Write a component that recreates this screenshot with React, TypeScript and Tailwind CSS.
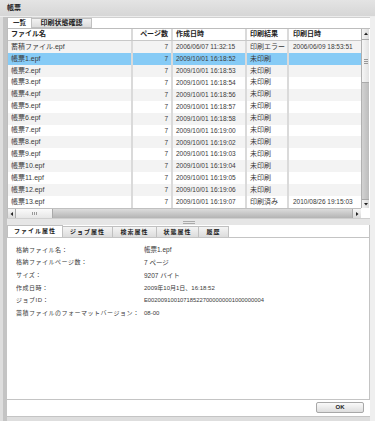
import React from "react";

const rows = [
  ["蓄積ファイル.epf", "7", "2006/06/07 11:32:15", "印刷エラー", "2006/06/09 18:53:51"],
  ["帳票1.epf", "7", "2009/10/01 16:18:52", "未印刷", ""],
  ["帳票2.epf", "7", "2009/10/01 16:18:53", "未印刷", ""],
  ["帳票3.epf", "7", "2009/10/01 16:18:54", "未印刷", ""],
  ["帳票4.epf", "7", "2009/10/01 16:18:56", "未印刷", ""],
  ["帳票5.epf", "7", "2009/10/01 16:18:57", "未印刷", ""],
  ["帳票6.epf", "7", "2009/10/01 16:18:58", "未印刷", ""],
  ["帳票7.epf", "7", "2009/10/01 16:19:00", "未印刷", ""],
  ["帳票8.epf", "7", "2009/10/01 16:19:02", "未印刷", ""],
  ["帳票9.epf", "7", "2009/10/01 16:19:03", "未印刷", ""],
  ["帳票10.epf", "7", "2009/10/01 16:19:04", "未印刷", ""],
  ["帳票11.epf", "7", "2009/10/01 16:19:05", "未印刷", ""],
  ["帳票12.epf", "7", "2009/10/01 16:19:06", "未印刷", ""],
  ["帳票13.epf", "7", "2009/10/01 16:19:07", "印刷済み", "2010/08/26 19:15:03"],
];

const props: [string, string, string][] = [
  ["格納ファイル名：", "帳票1.epf", "text-[6.5px]"],
  ["格納ファイルページ数：", "7 ページ", "text-[6.5px]"],
  ["サイズ：", "9207 バイト", "text-[6.5px]"],
  ["作成日時：", "2009年10月1日、16:18:52", "text-[6px]"],
  ["ジョブID：", "E002009100107185227000000001000000004", "text-[5.8px]"],
  ["蓄積ファイルのフォーマットバージョン：", "08-00", "text-[6px]"],
];

function Tri({ dir }: { dir: "up" | "down" | "left" | "right" }) {
  const pts =
    dir === "up"
      ? "1,4 3,1.5 5,4"
      : dir === "down"
      ? "1,2 3,4.5 5,2"
      : dir === "left"
      ? "4,1 1.5,3 4,5"
      : "2,1 4.5,3 2,5";
  return (
    <svg width="6" height="6" viewBox="0 0 6 6">
      <polygon points={pts} fill="#222" />
    </svg>
  );
}

export default function App() {
  return (
    <div
      className="w-[375px] h-[421px] bg-[#dedede] flex flex-col text-[#3a3a3a] overflow-hidden"
      style={{ fontFamily: '"Liberation Sans", "Noto Sans CJK JP", sans-serif' }}
    >
      {/* title */}
      <div className="h-[16px] px-[7px] flex items-center bg-gradient-to-b from-[#e4e4e4] to-[#d6d6d6]">
        <span className="text-[7px] font-bold text-[#222]">帳票</span>
      </div>
      <div className="h-[1px] bg-[#ececec]" />

      <div className="flex-1 flex ml-[3px]">
        <div className="w-[4px] bg-[#c4c4c4]" />
        <div className="w-[363px] flex flex-col">
          {/* top tabs */}
          <div className="h-[11px] flex items-end bg-white border-t border-[#d0d0d0]">
            <div className="h-[11px] w-[25px] bg-white border border-b-0 border-[#c0c0c0] flex items-center justify-center text-[6.5px] font-bold text-[#222]">
              一覧
            </div>
            <div className="h-[10px] w-[60px] bg-gradient-to-b from-[#f2f2f2] to-[#dcdcdc] border border-l-0 border-[#c0c0c0] flex items-center justify-center text-[7px] font-bold text-[#222]">
              印刷状態確認
            </div>
          </div>

          {/* table */}
          <div className="h-[180px] flex border-t border-l border-[#bdbdbd] bg-white">
            <div className="w-[353px] flex flex-col">
              <div className="h-[12px] flex border-b border-[#c8c8c8] text-[7px] font-bold text-[#222]">
                <div className="w-[125px] px-[3px] flex items-center border-r-2 border-[#dadada]">ファイル名</div>
                <div className="w-[40px] px-[3px] flex items-center justify-end border-r-2 border-[#dadada]">ページ数</div>
                <div className="w-[74px] px-[3px] flex items-center border-r-2 border-[#dadada]">作成日時</div>
                <div className="w-[42px] px-[3px] flex items-center border-r-2 border-[#dadada]">印刷結果</div>
                <div className="w-[72px] px-[4px] flex items-center">印刷日時</div>
              </div>
              {rows.map((r, i) => (
                <div
                  key={i}
                  className={
                    "h-[12px] flex text-[7px] " +
                    (i === 1 ? "bg-[#86cbf6]" : i % 2 === 0 ? "bg-[#f3f3f3]" : "bg-white")
                  }
                >
                  <div className="w-[125px] px-[3px] flex items-center border-r-2 border-[#dadada] whitespace-nowrap">{r[0]}</div>
                  <div className="w-[40px] px-[3px] flex items-center justify-end border-r-2 border-[#dadada] text-[6.5px]">{r[1]}</div>
                  <div className="w-[74px] px-[3px] flex items-center border-r-2 border-[#dadada] whitespace-nowrap text-[6.5px]">{r[2]}</div>
                  <div className="w-[42px] px-[3px] flex items-center border-r-2 border-[#dadada] whitespace-nowrap">{r[3]}</div>
                  <div className="w-[72px] px-[4px] flex items-center whitespace-nowrap text-[6.5px]">{r[4]}</div>
                </div>
              ))}
            </div>
            {/* vertical scrollbar */}
            <div className="w-[8px] flex flex-col bg-[#c6c6c6] border-l border-[#b0b0b0]">
              <div className="h-[11px] bg-gradient-to-r from-[#f4f4f4] to-[#dcdcdc] border-b border-[#aaa] flex items-center justify-center">
                <Tri dir="up" />
              </div>
              <div className="h-[43px] bg-gradient-to-r from-[#f6f6f6] to-[#e2e2e2] border-b border-[#aaa] flex flex-col items-center justify-center gap-[1px]">
                <div className="w-[4px] h-[1px] bg-[#999]" />
                <div className="w-[4px] h-[1px] bg-[#999]" />
                <div className="w-[4px] h-[1px] bg-[#999]" />
              </div>
              <div className="flex-1 bg-gradient-to-r from-[#d2d2d2] to-[#bcbcbc]" />
              <div className="h-[9px] bg-gradient-to-r from-[#f4f4f4] to-[#dcdcdc] border-t border-[#aaa] flex items-center justify-center">
                <Tri dir="down" />
              </div>
            </div>
          </div>

          {/* horizontal scrollbar */}
          <div className="h-[10px] flex bg-white border-l border-[#bdbdbd]">
            <div className="w-[353px] flex border-t border-[#c0c0c0]">
              <div className="w-[8px] bg-gradient-to-b from-[#f6f6f6] to-[#dadada] border-r border-[#aaa] flex items-center justify-center">
                <Tri dir="left" />
              </div>
              <div className="w-[37px] bg-gradient-to-b from-[#fafafa] to-[#e6e6e6] border-r border-[#aaa] flex items-center justify-center gap-[1px]">
                <div className="w-[1px] h-[3px] bg-[#999]" />
                <div className="w-[1px] h-[3px] bg-[#999]" />
                <div className="w-[1px] h-[3px] bg-[#999]" />
              </div>
              <div className="flex-1 bg-gradient-to-b from-[#dcdcdc] to-[#b4b4b4]" />
              <div className="w-[9px] bg-gradient-to-b from-[#f6f6f6] to-[#dadada] border-l border-[#aaa] flex items-center justify-center">
                <Tri dir="right" />
              </div>
            </div>
            <div className="w-[9px] bg-white" />
          </div>

          {/* splitter */}
          <div className="h-[7px] bg-[#e6e6e6] border-t border-[#cfcfcf] flex items-center justify-center">
            <div className="flex flex-col gap-[1px]">
              <div className="w-[12px] h-[1px] bg-[#aaa]" />
              <div className="w-[12px] h-[1px] bg-[#aaa]" />
            </div>
          </div>

          {/* bottom tabs */}
          <div className="h-[13px] flex items-end bg-white border-b border-[#c4c4c4] border-r">
            <div className="h-[12px] w-[56px] bg-white border border-b-0 border-[#c0c0c0] flex items-center justify-center text-[6px] font-bold tracking-[1px] text-[#222]">
              ファイル属性
            </div>
            {[
              ["ジョブ属性", "w-[50px]"],
              ["検索属性", "w-[44px]"],
              ["状態属性", "w-[42px]"],
              ["履歴", "w-[30px]"],
            ].map(([t, w]) => (
              <div
                key={t}
                className={
                  "h-[11px] bg-gradient-to-b from-[#f4f4f4] to-[#dcdcdc] border border-l-0 border-b-0 border-[#c0c0c0] flex items-center justify-center text-[6px] font-bold tracking-[1px] text-[#222] " +
                  w
                }
              >
                {t}
              </div>
            ))}
          </div>

          {/* property panel */}
          <div className="h-[161px] bg-white border-r border-[#c4c4c4] pt-[6px] pl-[9px]">
            {props.map(([k, v, sz]) => (
              <div key={k} className="h-[12.6px] flex items-center text-[#3a3a3a] whitespace-nowrap">
                <div className="w-[128px] text-[6px] tracking-[0.5px]">{k}</div>
                <div className={sz}>{v}</div>
              </div>
            ))}
          </div>

          {/* footer */}
          <div className="h-[18px] bg-white border-t border-b border-[#c4c4c4] flex justify-end pt-[2px] pr-[6px]">
            <div className="w-[48px] h-[11px] rounded-[2px] border border-[#a8a8a8] bg-gradient-to-b from-[#fafafa] to-[#dedede] flex items-center justify-center text-[6px] font-bold text-[#222]">
              OK
            </div>
          </div>
          <div className="flex-1 bg-[#dedede]" />
        </div>
        <div className="flex-1 bg-[#efefef]" />
      </div>
    </div>
  );
}
